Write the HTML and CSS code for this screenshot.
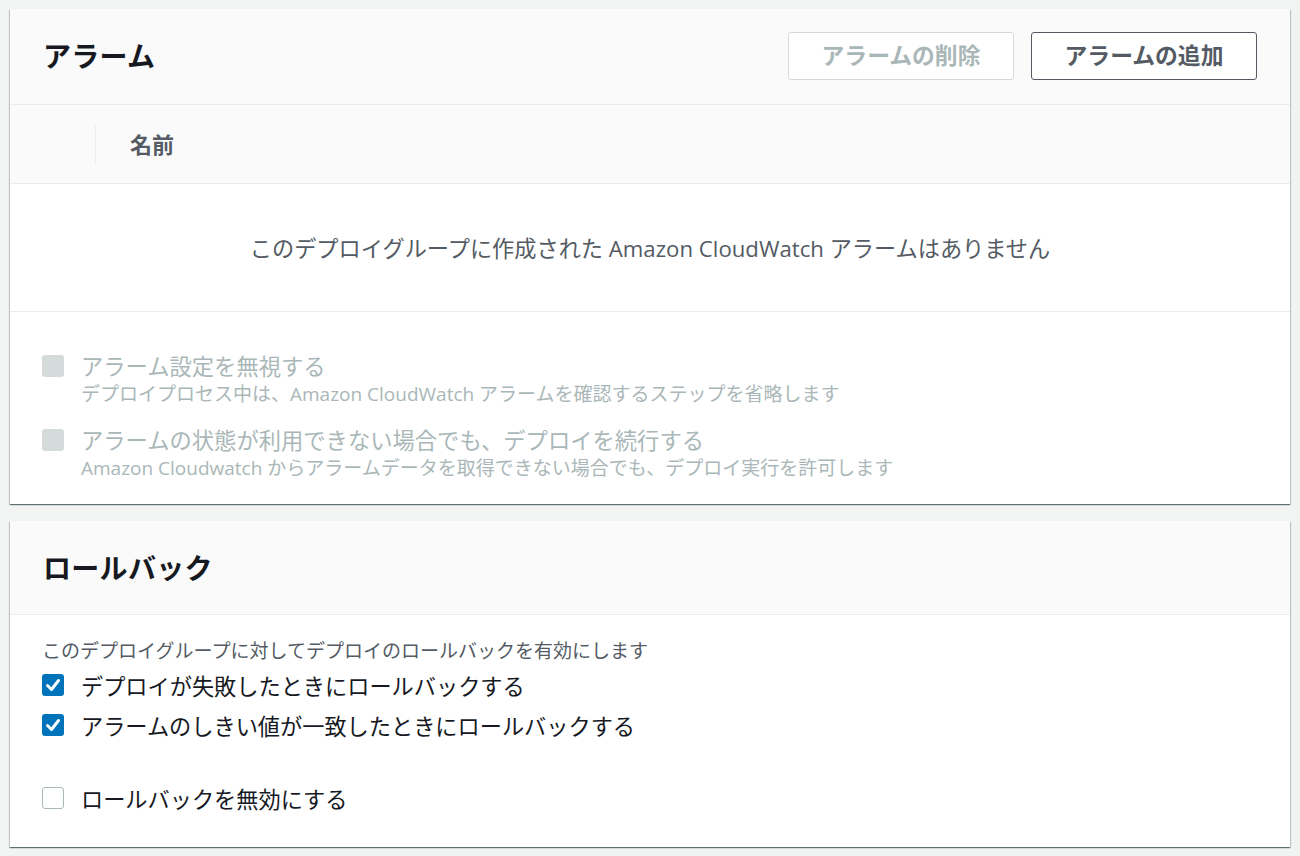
FILE: index.html
```html
<!DOCTYPE html>
<html lang="ja">
<head>
<meta charset="utf-8">
<link rel="stylesheet" href="styles.css">
</head>
<body>
<section class="card card-alarms">
  <header class="card-header card-header-tall">
    <h2 class="card-title">アラーム</h2>
    <div class="actions">
      <button class="btn btn-disabled" disabled>アラームの削除</button>
      <button class="btn">アラームの追加</button>
    </div>
  </header>
  <div class="table-head">
    <div class="col-select"></div>
    <div class="col-name">名前</div>
  </div>
  <div class="empty">このデプロイグループに作成された Amazon CloudWatch アラームはありません</div>
  <div class="options">
    <label class="opt disabled">
      <span class="box box-disabled"></span>
      <span class="opt-text">
        <span class="opt-label">アラーム設定を無視する</span>
        <span class="opt-desc">デプロイプロセス中は、Amazon CloudWatch アラームを確認するステップを省略します</span>
      </span>
    </label>
    <label class="opt disabled">
      <span class="box box-disabled"></span>
      <span class="opt-text">
        <span class="opt-label">アラームの状態が利用できない場合でも、デプロイを続行する</span>
        <span class="opt-desc">Amazon Cloudwatch からアラームデータを取得できない場合でも、デプロイ実行を許可します</span>
      </span>
    </label>
  </div>
</section>

<section class="card card-rollback">
  <header class="card-header">
    <h2 class="card-title">ロールバック</h2>
  </header>
  <div class="rb-body">
    <p class="rb-desc">このデプロイグループに対してデプロイのロールバックを有効にします</p>
    <label class="rb-opt">
      <span class="box box-checked"><svg viewBox="0 0 22 22" width="22" height="22"><path d="M5.5 11.5 L9.5 15.5 L16.5 6.5" fill="none" stroke="#fff" stroke-width="3" stroke-linecap="round" stroke-linejoin="round"/></svg></span>
      <span class="rb-label">デプロイが失敗したときにロールバックする</span>
    </label>
    <label class="rb-opt">
      <span class="box box-checked"><svg viewBox="0 0 22 22" width="22" height="22"><path d="M5.5 11.5 L9.5 15.5 L16.5 6.5" fill="none" stroke="#fff" stroke-width="3" stroke-linecap="round" stroke-linejoin="round"/></svg></span>
      <span class="rb-label">アラームのしきい値が一致したときにロールバックする</span>
    </label>
    <label class="rb-opt rb-opt-sep">
      <span class="box box-empty"></span>
      <span class="rb-label">ロールバックを無効にする</span>
    </label>
  </div>
</section>
</body>
</html>
```

FILE: styles.css
```css
* { box-sizing: border-box; }
html, body { margin: 0; padding: 0; }
body {
  background: #f2f3f3;
  padding: 9px 10px 0 10px;
  font-family: "Open Sans", "Noto Sans CJK JP", sans-serif;
  color: #16191f;
}
.card {
  background: #fff;
  box-shadow: 0 1px 1px 0 rgba(0,28,36,0.45), 1px 1px 1px 0 rgba(0,28,36,0.15), -1px 1px 1px 0 rgba(0,28,36,0.15);
  margin-bottom: 17px;
}
.card-header {
  background: #fafafa;
  height: 94px;
  border-bottom: 1px solid #eaeded;
  display: flex;
  align-items: center;
  justify-content: space-between;
  padding: 0 33px;
}
.card-header-tall { height: 96px; padding-bottom: 2px; }
.card-title {
  margin: 0;
  font-size: 28px;
  font-weight: 700;
  color: #16191f;
  line-height: 1;
  letter-spacing: 0.3px;
}
.actions { display: flex; gap: 17px; }
.btn {
  width: 226px;
  height: 48px;
  background: #fff;
  border: 1px solid #545b64;
  border-radius: 3px;
  font-family: inherit;
  font-size: 22.8px;
  font-weight: 700;
  color: #545b64;
  padding: 0 0 2px 0;
}
.btn-disabled {
  border-color: #d5dbdb;
  color: #aab7b8;
}
.table-head {
  background: #fafafa;
  height: 79px;
  border-bottom: 1px solid #eaeded;
  display: flex;
  align-items: center;
}
.col-select {
  width: 86px;
  height: 37px;
  border-right: 1px solid #eaeded;
}
.col-name {
  padding-left: 34px;
  padding-bottom: 2px;
  font-size: 22px;
  font-weight: 700;
  color: #545b64;
}
.empty {
  height: 128px;
  border-bottom: 1px solid #eaeded;
  display: flex;
  align-items: center;
  justify-content: center;
  font-size: 22.2px;
  color: #545b64;
  padding-bottom: 1px;
}
.options {
  padding: 43px 32px 21px 32px;
  display: flex;
  flex-direction: column;
  gap: 20px;
}
.opt {
  display: flex;
  align-items: flex-start;
  gap: 17px;
}
.box {
  width: 22px;
  height: 22px;
  flex: none;
  border-radius: 3px;
  display: block;
}
.box-disabled { background: #d5dbdb; }
.box-checked { background: #0073bb; }
.box-checked svg { display: block; }
.box-empty { border: 1px solid #aab7b8; background: #fff; }
.opt-text { display: flex; flex-direction: column; margin-top: -2px; }
.opt-label {
  font-size: 22.3px;
  line-height: 27px;
  color: #aab7b8;
}
.opt-desc {
  font-size: 19px;
  line-height: 29px;
  color: #aab7b8;
}
.rb-body {
  padding: 23px 32px 38px 32px;
}
.rb-desc {
  margin: 0 0 10px 0;
  font-size: 19px;
  line-height: 26px;
  color: #545b64;
}
.rb-opt {
  display: flex;
  align-items: center;
  gap: 17px;
  height: 22px;
  margin-bottom: 18px;
}
.rb-opt-sep { margin-top: 51px; margin-bottom: 0; }
.rb-label {
  font-size: 22.2px;
  color: #16191f;
}
```
